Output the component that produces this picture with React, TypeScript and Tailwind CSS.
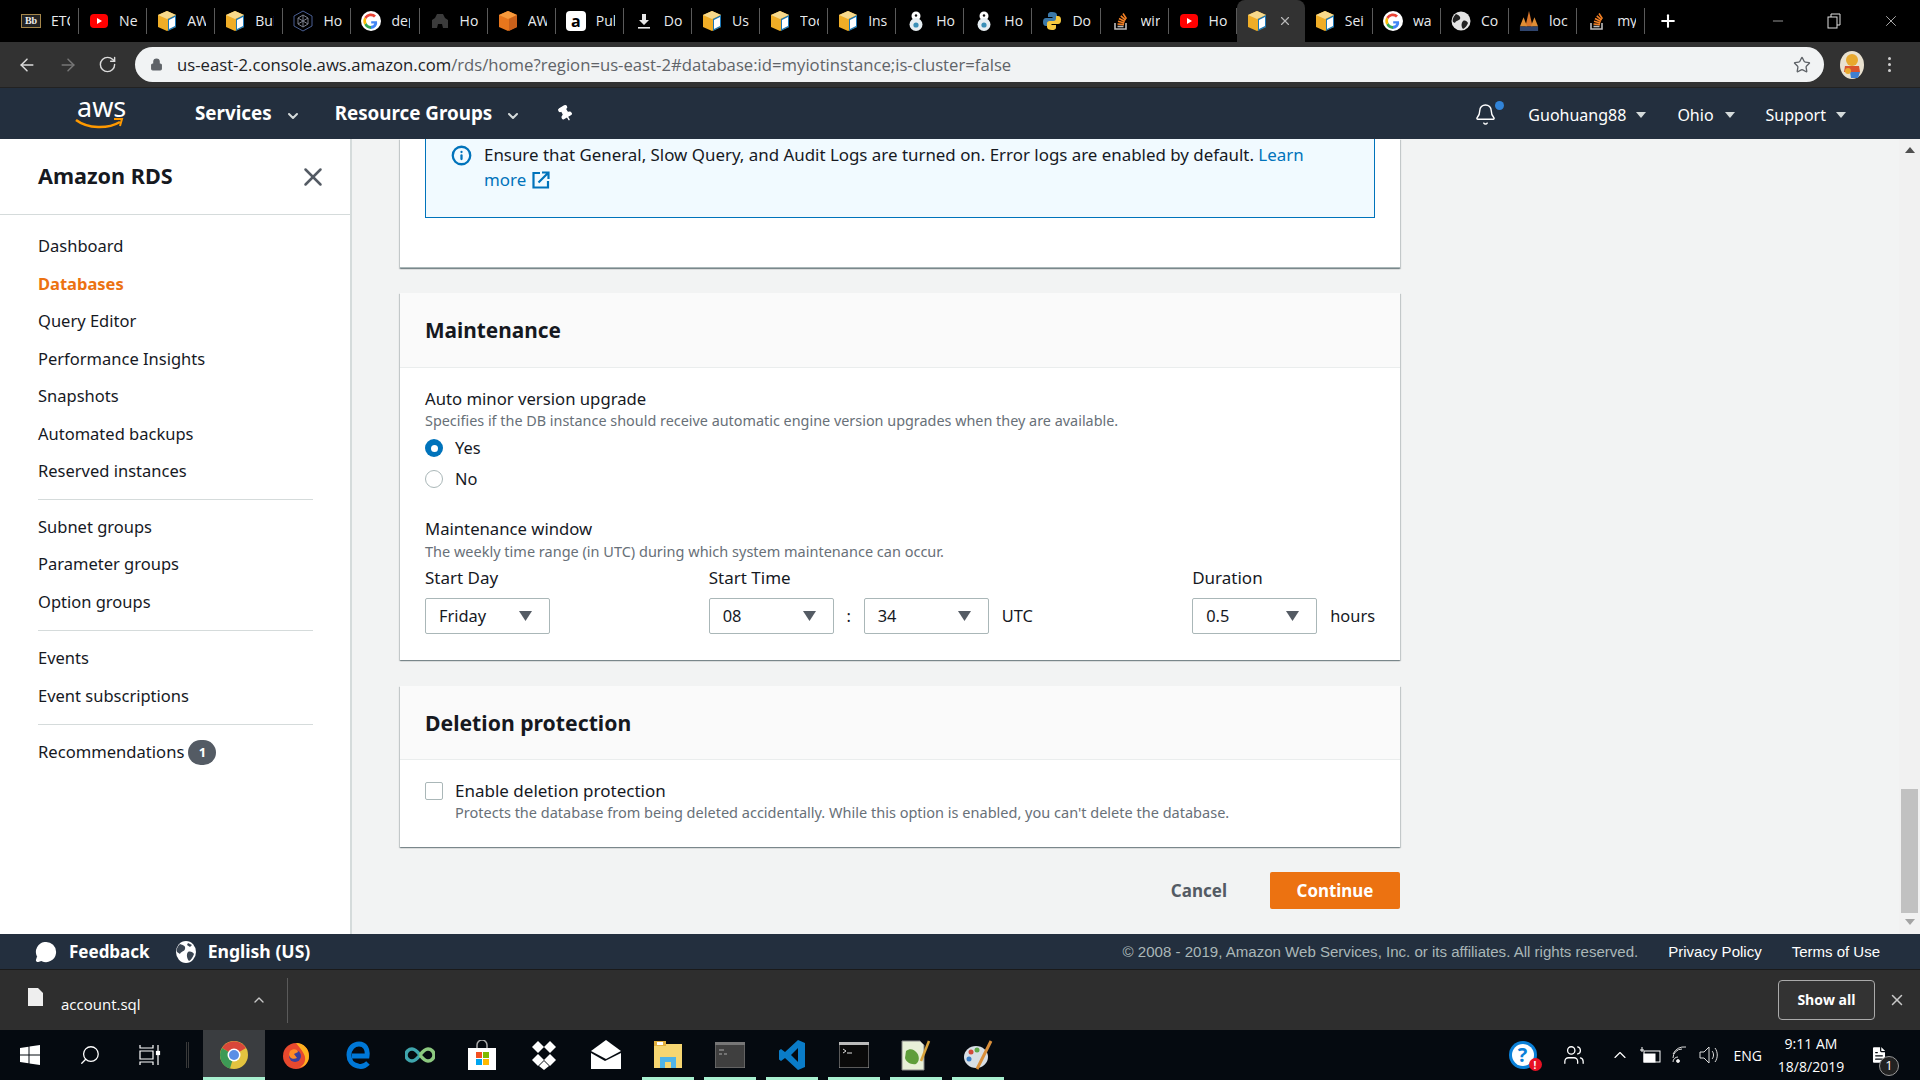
import React from 'react';
import { ArrowLeft, ArrowRight, RotateCw, Lock, Star, Plus, Minus, X, Bell, ChevronDown, ChevronUp, Search, Info, Pin, MessageCircle, FileText, Users } from 'lucide-react';

const Box: React.FC<{ orange?: boolean }> = ({ orange }) => (
  <svg width="20" height="22" viewBox="0 0 20 22">
    <polygon points="10,1 19,5 19,17 10,21 1,17 1,5" fill={orange ? '#e8761c' : '#f0ad26'} />
    <polygon points="1,5 10,9 19,5 10,1" fill={orange ? '#f79a3c' : '#f7d98c'} />
    <polygon points="11,9 19,5 19,17 11,21" fill={orange ? '#c9601a' : '#1b76b5'} />
    {!orange && <polygon points="12,10 18,7 18,16 12,19" fill="#ffffff" />}
  </svg>
);

const GoogleG: React.FC = () => (
  <svg width="20" height="20" viewBox="0 0 20 20">
    <circle cx="10" cy="10" r="10" fill="#fff" />
    <path d="M16 10.2H10.2v2.4h3.2a3.5 3.5 0 0 1-3.4 2.2V18a6.2 6.2 0 0 0 6-7.8z" fill="#4285f4" />
    <path d="M5.5 12a5 5 0 0 0 4.5 3v3a8 8 0 0 1-6.7-4.2z" fill="#34a853" />
    <path d="M5.3 8A5 5 0 0 0 5.5 12l-2.2 1.8a8 8 0 0 1 0-7.6z" fill="#fbbc05" />
    <path d="M3.4 6.1A7.6 7.6 0 0 1 15 4.4L13 6.4A5 5 0 0 0 5.3 8z" fill="#ea4335" />
  </svg>
);

const Youtube: React.FC = () => (
  <svg width="20" height="16" viewBox="0 0 20 16">
    <rect x="1" y="1" width="18" height="14" rx="4" fill="#ff0000" />
    <polygon points="8,5 13,8 8,11" fill="#fff" />
  </svg>
);

const StackOverflow: React.FC = () => (
  <svg width="20" height="20" viewBox="0 0 20 20" fill="none">
    <path d="M4 12v6h11v-6" stroke="#bcbbbb" strokeWidth="1.6" />
    <path d="M6.5 15.5h6" stroke="#bcbbbb" strokeWidth="1.6" />
    <path d="M6.5 13l6.5 .6M7 10.2l6.3 1.7M8 7.5l5.8 3M9.8 4.8l4.8 4.4M12 2.5l3.4 5.3" stroke="#f48024" strokeWidth="1.6" />
  </svg>
);

const BB8: React.FC = () => (
  <svg width="20" height="22" viewBox="0 0 20 22">
    <circle cx="10" cy="6" r="4.5" fill="#fff" />
    <circle cx="10" cy="14.5" r="6.5" fill="#e6eef2" />
    <circle cx="10" cy="15" r="2.6" fill="#3a8fb7" />
    <circle cx="10" cy="5.5" r="1.2" fill="#111" />
  </svg>
);

const Favicon: React.FC<{ kind: string }> = ({ kind }) => {
  switch (kind) {
    case 'bb':
      return <span className="flex h-[14px] w-[20px] items-center justify-center border border-[#a5864a] bg-[#222] text-[10px] font-bold leading-none text-[#eee] [font-family:'Liberation_Serif',serif]">Bb</span>;
    case 'yt':
      return <Youtube />;
    case 'box':
      return <Box />;
    case 'obox':
      return <Box orange />;
    case 'hex':
      return (
        <svg width="20" height="22" viewBox="0 0 20 22" fill="none" stroke="#4a5f94" strokeWidth="1">
          <polygon points="10,1 19,6 19,16 10,21 1,16 1,6" />
          <polygon points="10,5 15,8 15,14 10,17 5,14 5,8" stroke="#7a7f8c" />
          <path d="M10 5v12M5 8l10 6M15 8L5 14" stroke="#7a7f8c" />
        </svg>
      );
    case 'g':
      return <GoogleG />;
    case 'cloud':
      return (
        <svg width="20" height="18" viewBox="0 0 20 18">
          <path d="M2 16V8l3-2 2-4h6l2 4 3 2v8h-5l-1-4H8l-1 4z" fill="#3b3b3b" />
        </svg>
      );
    case 'a':
      return (
        <span className="flex h-[20px] w-[20px] items-center justify-center rounded-[4px] bg-white text-[16px] font-bold leading-none text-black">a</span>
      );
    case 'dl':
      return (
        <svg width="20" height="20" viewBox="0 0 20 20" fill="#e8e8e8">
          <polygon points="8,3 12,3 12,9 15,9 10,14 5,9 8,9" />
          <rect x="4" y="16" width="12" height="1.6" />
        </svg>
      );
    case 'bb8':
      return <BB8 />;
    case 'py':
      return (
        <svg width="20" height="20" viewBox="0 0 20 20">
          <path d="M10 1C6 1 6 3 6 4v2h4.500v1H4C2 7 1 8.500 1 11s1 4 3 4h2v-2.500C6 11 7 10 8.500 10h4C14 10 15 9 15 7.500V4c0-2-2-3-5-3z" fill="#3b78a8" />
          <path d="M10 19c4 0 4-2 4-3v-2H9.500v-1H16c2 0 3-1.500 3-4s-1-4-3-4h-2v2.500C14 9 13 10 11.500 10h-4C6 10 5 11 5 12.500V16c0 2 2 3 5 3z" fill="#f6c93f" />
        </svg>
      );
    case 'so':
      return <StackOverflow />;
    case 'globe':
      return (
        <svg width="20" height="20" viewBox="0 0 20 20">
          <circle cx="10" cy="10" r="9.500" fill="#e4e4e4" />
          <path d="M5 3c3 1 5 3 4 5s-4 1-5 4l-2-1c-1-3 1-6 3-8zM12 10c2-1 4 0 5 2-1 3-3 5-5 6-2-2-2-6 0-8z" fill="#222" />
        </svg>
      );
    case 'paa':
      return (
        <svg width="22" height="24" viewBox="0 0 22 24">
          <polygon points="11,1 15,18 7,18" fill="#d9762b" />
          <polygon points="5,8 9,18 1,18" fill="#e08e35" />
          <polygon points="17,8 21,18 13,18" fill="#e08e35" />
          <rect x="1" y="18" width="20" height="5" fill="#30456e" />
        </svg>
      );
    default:
      return null;
  }
};

const tabs: { kind: string; label: string; active?: boolean }[] = [
  { kind: 'bb', label: 'ETC' },
  { kind: 'yt', label: 'Ne' },
  { kind: 'box', label: 'AW' },
  { kind: 'box', label: 'Bui' },
  { kind: 'hex', label: 'Ho' },
  { kind: 'g', label: 'dep' },
  { kind: 'cloud', label: 'Ho' },
  { kind: 'obox', label: 'AW' },
  { kind: 'a', label: 'Pul' },
  { kind: 'dl', label: 'Do' },
  { kind: 'box', label: 'Us' },
  { kind: 'box', label: 'Too' },
  { kind: 'box', label: 'Ins' },
  { kind: 'bb8', label: 'Ho' },
  { kind: 'bb8', label: 'Ho' },
  { kind: 'py', label: 'Do' },
  { kind: 'so', label: 'wir' },
  { kind: 'yt', label: 'Ho' },
  { kind: 'box', label: '', active: true },
  { kind: 'box', label: 'Sei' },
  { kind: 'g', label: 'wa' },
  { kind: 'globe', label: 'Co' },
  { kind: 'paa', label: 'loc' },
  { kind: 'so', label: 'my' },
];

const TabStrip: React.FC = () => (
  <div className="flex h-[42px] items-center bg-black pl-[11px] text-[#e8eaed] [font-family:'Open_Sans',sans-serif]">
    {tabs.map((t, i) =>
      t.active ? (
        <div key={i} className="flex h-[42px] w-[68.1px] items-center rounded-t-[8px] bg-[#323232] pl-[10px]">
          <Favicon kind={t.kind} />
          <X className="ml-[11px] h-[14px] w-[14px] text-[#b8b8b8]" />
        </div>
      ) : (
        <div key={i} className="flex h-[26px] w-[68.1px] items-center border-r border-[#5a5a5a] pl-[10px]">
          <span className="flex w-[20px] shrink-0 justify-center"><Favicon kind={t.kind} /></span>
          <span className="ml-[10px] w-[19px] overflow-hidden whitespace-nowrap text-[14px] leading-none">{t.label}</span>
        </div>
      ),
    )}
    <Plus className="ml-[13px] h-[20px] w-[20px] text-white" strokeWidth={2.5} />
    <div className="ml-auto flex items-center text-[#e0e0e0]">
      <Minus className="h-[16px] w-[16px]" strokeWidth={1} />
      <svg className="ml-[41px]" width="14" height="16" viewBox="0 0 14 16" fill="none" stroke="#e0e0e0" strokeWidth="1">
        <rect x="1" y="4" width="9" height="11" />
        <path d="M4 4V1h9v11h-3" />
      </svg>
      <X className="ml-[41px] mr-[20px] h-[18px] w-[18px]" strokeWidth={1} />
    </div>
  </div>
);

const Avatar: React.FC = () => (
  <svg className="ml-[16px]" width="24" height="28" viewBox="0 0 24 28">
    <ellipse cx="12" cy="14" rx="12" ry="14" fill="#e9e1cf" />
    <circle cx="12" cy="9" r="6" fill="#e8a92e" />
    <path d="M5 15h14l1 6H4z" fill="#d9542e" />
    <path d="M10 21h10l-2 6h-7z" fill="#3f7fd0" />
    <circle cx="8" cy="20" r="3" fill="#e8a92e" />
  </svg>
);

const Toolbar: React.FC = () => (
  <div className="flex h-[46px] items-center border-b border-[#222] bg-[#323232]">
    <ArrowLeft className="ml-[17px] h-[20px] w-[20px] text-[#dcdcdc]" strokeWidth={1.8} />
    <ArrowRight className="ml-[21px] h-[20px] w-[20px] text-[#777]" strokeWidth={1.8} />
    <RotateCw className="ml-[20px] h-[19px] w-[19px] text-[#dcdcdc]" strokeWidth={1.8} />
    <div className="ml-[18px] flex h-[35px] w-[1689px] items-center rounded-full bg-[#f1f3f4] pl-[15px]">
      <Lock className="h-[13px] w-[13px] fill-[#5f6368] text-[#5f6368]" />
      <span className="ml-[14px] mt-px whitespace-nowrap text-[16.7px] leading-none text-[#5f6368] [font-family:'Open_Sans',sans-serif]">
        <span className="text-[#202124]">us-east-2.console.aws.amazon.com</span>/rds/home?region=us-east-2#database:id=myiotinstance;is-cluster=false
      </span>
      <Star className="ml-auto mr-[13px] h-[18px] w-[18px] text-[#5f6368]" strokeWidth={1.8} />
    </div>
    <Avatar />
    <div className="ml-[24px] flex flex-col gap-[3px]">
      <span className="h-[3px] w-[3px] rounded-full bg-[#d0d0d0]" />
      <span className="h-[3px] w-[3px] rounded-full bg-[#d0d0d0]" />
      <span className="h-[3px] w-[3px] rounded-full bg-[#d0d0d0]" />
    </div>
  </div>
);

const Caret: React.FC<{ className?: string }> = ({ className }) => (
  <svg className={className} width="10" height="6" viewBox="0 0 10 6"><polygon points="0,0 10,0 5,6" fill="#d5dbdb" /></svg>
);

const NavBar: React.FC = () => (
  <div className="flex h-[51px] items-center bg-[#232f3e] pl-[75px] text-white">
    <div className="relative h-[38px] w-[50px]">
      <span className="absolute left-[2px] top-[-3px] text-[27px] leading-[30px] text-white">aws</span>
      <svg className="absolute left-[-1px] top-[22px]" width="52" height="14" viewBox="0 0 52 14" fill="none">
        <path d="M2 3c12 9 32 9 44 2" stroke="#ff9900" strokeWidth="2.600" />
        <path d="M40 2h8l-2 7" stroke="#ff9900" strokeWidth="2" />
      </svg>
    </div>
    <span className="ml-[70px] text-[18.8px] font-bold">Services</span>
    <ChevronDown className="ml-[13px] mt-[4px] h-[16px] w-[16px] text-[#d5dbdb]" strokeWidth={3} />
    <span className="ml-[34px] text-[18.8px] font-bold">Resource Groups</span>
    <ChevronDown className="ml-[13px] mt-[4px] h-[16px] w-[16px] text-[#d5dbdb]" strokeWidth={3} />
    <Pin className="ml-[36px] h-[17px] w-[17px] rotate-[-30deg] fill-white text-white" />
    <div className="ml-auto flex items-center pr-[74px] pt-[3px] text-[16px]">
      <div className="relative h-[24px] w-[24px]">
        <Bell className="h-[23px] w-[23px]" strokeWidth={1.5} />
        <span className="absolute right-[-6px] top-[-2px] h-[9px] w-[9px] rounded-full bg-[#3184d8]" />
      </div>
      <span className="ml-[30px]">Guohuang88</span>
      <Caret className="ml-[10px]" />
      <span className="ml-[31px]">Ohio</span>
      <Caret className="ml-[11px]" />
      <span className="ml-[31px]">Support</span>
      <Caret className="ml-[10px]" />
    </div>
  </div>
);

const SideItem: React.FC<{ label: string; active?: boolean }> = ({ label, active }) => (
  <div className={`h-[37.5px] text-[16.5px] leading-[35.5px] ${active ? 'font-bold text-[#ec7211]' : 'text-[#16191f]'}`}>{label}</div>
);

const SideRule: React.FC = () => <div className="mr-[37px] h-px bg-[#d5dbdb]" />;

const SideNav: React.FC = () => (
  <aside className="w-[352px] shrink-0 border-r-2 border-[#d5dbdb] bg-white">
    <div className="flex h-[76px] items-center justify-between border-b border-[#d5dbdb] pl-[38px] pr-[22px]">
      <h2 className="mb-[2px] text-[21.6px] font-bold leading-none text-[#16191f]">Amazon RDS</h2>
      <X className="h-[30px] w-[30px] text-[#545b64]" strokeWidth={2} />
    </div>
    <div className="pl-[38px] pt-[13px]">
      <SideItem label="Dashboard" />
      <SideItem label="Databases" active />
      {['Query Editor', 'Performance Insights', 'Snapshots', 'Automated backups', 'Reserved instances'].map((l) => <SideItem key={l} label={l} />)}
      <div className="h-[8px]" />
      <SideRule />
      <div className="h-[9px]" />
      {['Subnet groups', 'Parameter groups', 'Option groups'].map((l) => <SideItem key={l} label={l} />)}
      <div className="h-[9px]" />
      <SideRule />
      <div className="h-[9px]" />
      {['Events', 'Event subscriptions'].map((l) => <SideItem key={l} label={l} />)}
      <div className="h-[9px]" />
      <SideRule />
      <div className="h-[9px]" />
      <div className="flex h-[37.5px] items-center text-[16.6px] text-[#16191f]">
        Recommendations
        <span className="ml-[4px] flex h-[25px] w-[28px] items-center justify-center rounded-full bg-[#545b64] text-[13px] font-bold text-white">1</span>
      </div>
    </div>
  </aside>
);

const Select: React.FC<{ value: string }> = ({ value }) => (
  <div className="flex h-[36px] w-[125px] shrink-0 items-center justify-between rounded-[2px] border border-[#aab7b8] bg-white pl-[13px] pr-[17px] text-[16.4px] text-[#16191f]">
    {value}
    <svg width="13" height="10" viewBox="0 0 13 10"><polygon points="0,0 13,0 6.500,10" fill="#545b64" /></svg>
  </div>
);

const LearnIcon: React.FC = () => (
  <svg className="ml-[6px] inline align-[-3px]" width="18" height="18" viewBox="0 0 18 18" fill="none" stroke="#0073bb" strokeWidth="2.200">
    <path d="M8 2H1.500v14.500H16V10" />
    <path d="M6.500 11.500L15.500 2.500M10 1.500h6.500V8" />
  </svg>
);

const cardShadow = 'shadow-[0_1px_1px_0_rgba(0,28,36,0.3),1px_1px_1px_0_rgba(0,28,36,0.15),-1px_1px_1px_0_rgba(0,28,36,0.15)]';

const Main: React.FC = () => (
  <main className="min-w-0 flex-1 overflow-hidden bg-[#f2f3f3] pl-[48px] text-[#16191f]">
    <div className="w-[1000px]">
      <section className={`border-b border-[#aab7b8] bg-white px-[25px] pb-[49px] ${cardShadow}`}>
        <div className="flex h-[79px] border border-t-0 border-[#0073bb] bg-[#f1faff] pl-[25px] pr-[50px] text-[16.9px] leading-[25px]">
          <Info className="mt-[6px] h-[21px] w-[21px] shrink-0 text-[#0073bb]" strokeWidth={2.6} />
          <div className="ml-[12px] mt-[3px]">
            <div className="whitespace-nowrap">
              Ensure that General, Slow Query, and Audit Logs are turned on. Error logs are enabled by default. <span className="text-[#0073bb]">Learn</span>
            </div>
            <div className="text-[#0073bb]">more<LearnIcon /></div>
          </div>
        </div>
      </section>

      <section className={`mt-[25px] bg-white ${cardShadow}`}>
        <div className="flex h-[75px] items-center border-b border-[#eaeded] bg-[#fafafa] px-[25px] pt-[2px]">
          <h2 className="text-[20.8px] font-bold">Maintenance</h2>
        </div>
        <div className="px-[25px] pb-[26px] pt-[20px]">
          <div className="text-[16.7px] leading-[22px]">Auto minor version upgrade</div>
          <div className="mt-[2px] text-[14.4px] leading-[18px] text-[#687078]">Specifies if the DB instance should receive automatic engine version upgrades when they are available.</div>
          <div className="mt-[6px] flex h-[24px] items-center text-[16.4px]">
            <span className="flex h-[18px] w-[18px] items-center justify-center rounded-full bg-[#0073bb]"><span className="h-[7px] w-[7px] rounded-full bg-white" /></span>
            <span className="ml-[12px]">Yes</span>
          </div>
          <div className="mt-[7px] flex h-[24px] items-center text-[16.4px]">
            <span className="h-[18px] w-[18px] rounded-full border border-[#aab7b8] bg-white" />
            <span className="ml-[12px]">No</span>
          </div>
          <div className="mt-[27px] text-[16.7px] leading-[22px]">Maintenance window</div>
          <div className="mt-[2px] text-[14.5px] leading-[18px] text-[#687078]">The weekly time range (in UTC) during which system maintenance can occur.</div>
          <div className="mt-[7px] flex text-[16.4px]">
            <div className="w-[284px]">
              <div className="text-[17px] leading-[22px]">Start Day</div>
              <div className="mt-[9px]"><Select value="Friday" /></div>
            </div>
            <div className="w-[484px]">
              <div className="text-[17px] leading-[22px]">Start Time</div>
              <div className="mt-[9px] flex items-center">
                <Select value="08" />
                <span className="w-[30px] text-center">:</span>
                <Select value="34" />
                <span className="ml-[13px]">UTC</span>
              </div>
            </div>
            <div>
              <div className="text-[17px] leading-[22px]">Duration</div>
              <div className="mt-[9px] flex items-center">
                <Select value="0.5" />
                <span className="ml-[13px]">hours</span>
              </div>
            </div>
          </div>
        </div>
      </section>

      <section className={`mt-[26px] bg-white ${cardShadow}`}>
        <div className="flex h-[74px] items-center border-b border-[#eaeded] bg-[#fafafa] px-[25px]">
          <h2 className="text-[21.2px] font-bold">Deletion protection</h2>
        </div>
        <div className="px-[25px] pb-[26px] pt-[20px]">
          <div className="flex h-[22px] items-center text-[17px]">
            <span className="h-[18px] w-[18px] rounded-[2px] border border-[#aab7b8] bg-white" />
            <span className="ml-[12px]">Enable deletion protection</span>
          </div>
          <div className="ml-[30px] mt-px text-[14.53px] leading-[18px] text-[#687078]">Protects the database from being deleted accidentally. While this option is enabled, you can't delete the database.</div>
        </div>
      </section>

      <div className="mt-[25px] flex items-center justify-end">
        <span className="text-[17px] font-bold text-[#545b64]">Cancel</span>
        <button className="ml-[43px] h-[37px] w-[130px] rounded-[2px] bg-[#ec7211] text-[16.9px] font-bold text-white">Continue</button>
      </div>
    </div>
  </main>
);

const ScrollBar: React.FC = () => (
  <div className="flex w-[21px] shrink-0 flex-col items-center bg-[#f1f1f1] pt-[8px]">
    <svg width="10" height="6" viewBox="0 0 10 6"><polygon points="5,0 10,6 0,6" fill="#505050" /></svg>
    <div className="mt-[636px] h-[124px] w-[17px] bg-[#c1c1c1]" />
    <svg className="mt-[6px]" width="10" height="6" viewBox="0 0 10 6"><polygon points="0,0 10,0 5,6" fill="#a3a3a3" /></svg>
  </div>
);

const FooterGlobe: React.FC = () => (
  <svg className="ml-[26px]" width="20" height="22" viewBox="0 0 20 22">
    <ellipse cx="10" cy="11" rx="10" ry="11" fill="#ffffff" />
    <path d="M4 3c3 1 6 2 5 5s-4 2-5 5l-3-2c-1-3 1-6 3-8zM12 11c2-1 5 0 6 2-1 3-3 6-5 7-2-2-3-7-1-9zM12 2l4 2-2 2-3-2z" fill="#3a4552" />
  </svg>
);

const Footer: React.FC = () => (
  <div className="flex h-[36px] items-center border-b border-[#1a1a1a] bg-[#232f3e] pl-[35px] pr-[40px] text-white">
    <MessageCircle className="h-[22px] w-[22px] fill-white text-white" />
    <span className="ml-[12px] text-[17px] font-bold">Feedback</span>
    <FooterGlobe />
    <span className="ml-[12px] text-[17.6px] font-bold">English (US)</span>
    <span className="ml-auto mt-[2px] text-[15.05px] text-[#aab7b8] [font-family:'Liberation_Sans',sans-serif]">© 2008 - 2019, Amazon Web Services, Inc. or its affiliates. All rights reserved.</span>
    <span className="ml-[30px] mt-[2px] text-[15px] [font-family:'Liberation_Sans',sans-serif]">Privacy Policy</span>
    <span className="ml-[30px] mt-[2px] text-[15px] [font-family:'Liberation_Sans',sans-serif]">Terms of Use</span>
  </div>
);

const DownloadBar: React.FC = () => (
  <div className="flex h-[60px] items-center bg-[#2e2e2e] text-white [font-family:'Open_Sans',sans-serif]">
    <div className="flex h-[45px] w-[288px] items-center border-r border-[#5a5a5a] pl-[28px]">
      <svg className="mb-[6px]" width="15" height="18" viewBox="0 0 15 18"><path d="M0 0h10l5 5v13H0z" fill="#eeeeee" /></svg>
      <span className="ml-[18px] mt-[8px] text-[15px]">account.sql</span>
      <ChevronUp className="ml-[110px] h-[16px] w-[16px] text-[#c8c8c8]" strokeWidth={2} />
    </div>
    <button className="mb-[1px] ml-auto h-[40px] w-[97px] rounded-[4px] border border-[#aaaaaa] bg-[#333] text-[14px] font-bold">Show all</button>
    <X className="ml-[13px] mr-[14px] h-[18px] w-[18px] text-[#c8c8c8]" strokeWidth={2} />
  </div>
);

const TaskIcon: React.FC<{ running?: boolean; active?: boolean; children: React.ReactNode }> = ({ running, active, children }) => (
  <div className={`relative flex h-[50px] w-[62px] shrink-0 items-center justify-center ${active ? 'bg-[#3a3d40]' : ''}`}>
    {children}
    {running && <span className={`absolute bottom-0 h-[3px] bg-[#a8f0d0] ${active ? 'left-0 right-0' : 'left-[5px] right-[5px]'}`} />}
  </div>
);

const Chrome: React.FC = () => (
  <svg width="28" height="28" viewBox="0 0 28 28">
    <circle cx="14" cy="14" r="14" fill="#e2c33f" />
    <path d="M14 14L2 7A14 14 0 0 1 26 7z" fill="#d8473a" />
    <path d="M14 14L2 7A14 14 0 0 0 10 27.500z" fill="#3d9a56" />
    <circle cx="14" cy="14" r="6.500" fill="#fff" />
    <circle cx="14" cy="14" r="5" fill="#5b8ee6" />
  </svg>
);

const Taskbar: React.FC = () => (
  <div className="flex h-[50px] items-center bg-[#050a10] text-white [font-family:'Open_Sans',sans-serif]">
    <svg className="ml-[20px]" width="20" height="20" viewBox="0 0 20 20" fill="#fff">
      <polygon points="0,3 8.500,1.800 8.500,9.500 0,9.500" />
      <polygon points="9.500,1.600 20,0 20,9.500 9.500,9.500" />
      <polygon points="0,10.500 8.500,10.500 8.500,18.200 0,17" />
      <polygon points="9.500,10.500 20,10.500 20,20 9.500,18.400" />
    </svg>
    <Search className="ml-[39px] h-[22px] w-[22px] -scale-x-100 text-white" strokeWidth={1.4} />
    <svg className="ml-[38px]" width="22" height="20" viewBox="0 0 22 20" fill="none" stroke="#fff" strokeWidth="1.200">
      <path d="M1 0v3h13V0M1 20v-3h13v3M1 6h13v8H1zM19 0v6M19 10v10" />
      <rect x="17.500" y="6.500" width="3" height="3" fill="#fff" />
    </svg>
    <span className="ml-[25px] h-[26px] w-[3px] border-x border-[#3a3a3a]" />
    <div className="ml-[14px] flex">
      <TaskIcon active running><Chrome /></TaskIcon>
      <TaskIcon>
        <svg width="28" height="28" viewBox="0 0 28 28">
          <circle cx="14" cy="15" r="13" fill="#e8492e" />
          <path d="M14 2c8 0 13 6 13 13s-5 12-13 12c6 0 10-5 9-11-1-4-4-8-9-14z" fill="#ffb11f" />
          <circle cx="13" cy="15" r="6" fill="#3a3f9b" />
          <path d="M8 10c3-3 8-2 8 1l-4 2 3 4c-4 2-8 0-8-4z" fill="#ff8b25" />
        </svg>
      </TaskIcon>
      <TaskIcon>
        <svg width="26" height="28" viewBox="0 0 26 28" fill="none">
          <path d="M23 22c-3 3-7 4-10 3-6-1-9-6-9-11C4 7 9 3 14 3c6 0 9 5 8 12H7" stroke="#0078d7" strokeWidth="5" />
        </svg>
      </TaskIcon>
      <TaskIcon>
        <svg width="30" height="16" viewBox="0 0 30 16" fill="none" strokeWidth="3.500">
          <path d="M15 8c-3-4-5-6-8-6a6 6 0 0 0 0 12c3 0 5-2 8-6" stroke="#3fa5ad" />
          <path d="M15 8c3-4 5-6 8-6a6 6 0 0 1 0 12c-3 0-5-2-8-6" stroke="#8cc97f" />
        </svg>
      </TaskIcon>
      <TaskIcon>
        <svg width="28" height="30" viewBox="0 0 28 30">
          <path d="M9 8V5a5 5 0 0 1 10 0v3" stroke="#aaa" strokeWidth="1.500" fill="none" />
          <rect x="0" y="8" width="28" height="22" fill="#fff" />
          <rect x="8" y="12" width="6" height="6" fill="#f25022" />
          <rect x="15" y="12" width="6" height="6" fill="#7fba00" />
          <rect x="8" y="19" width="6" height="6" fill="#00a4ef" />
          <rect x="15" y="19" width="6" height="6" fill="#ffb900" />
        </svg>
      </TaskIcon>
      <TaskIcon>
        <svg width="28" height="30" viewBox="0 0 28 30" fill="#fff">
          <polygon points="8,1 14,7 8,13 2,7" />
          <polygon points="20,1 26,7 20,13 14,7" />
          <polygon points="8,14 14,20 8,26 2,20" />
          <polygon points="20,14 14,20 20,26 26,20" />
          <polygon points="14,21 19,26 14,30 9,26" />
        </svg>
      </TaskIcon>
      <TaskIcon>
        <svg width="30" height="30" viewBox="0 0 30 30" fill="#fff">
          <polygon points="15,0 30,11 15,19 0,11" />
          <polygon points="0,13 14,21 30,13 30,29 0,29" />
        </svg>
      </TaskIcon>
      <TaskIcon running>
        <svg width="28" height="28" viewBox="0 0 28 28">
          <rect x="0" y="3" width="28" height="24" fill="#f6d671" />
          <rect x="0" y="0" width="12" height="5" fill="#e3b13f" />
          <rect x="3" y="1" width="6" height="3" fill="#fff" />
          <rect x="6" y="16" width="16" height="11" fill="#4fb4e8" />
          <rect x="11" y="21" width="6" height="6" fill="#f6d671" />
        </svg>
      </TaskIcon>
      <TaskIcon running>
        <svg width="30" height="26" viewBox="0 0 30 26">
          <rect x="0" y="0" width="30" height="26" fill="#3f3f3f" stroke="#888" />
          <rect x="0" y="0" width="30" height="3" fill="#777" />
          <path d="M4 8h5M4 12h3M9 12h3" stroke="#aaa" />
        </svg>
      </TaskIcon>
      <TaskIcon running>
        <svg width="26" height="30" viewBox="0 0 26 30">
          <path d="M19 0l7 3v24l-7 3L6 18l-4 3-2-1.500V10.500L2 9l4 3z" fill="#0a7cc8" />
          <path d="M19 8l-7 7 7 7z" fill="#050a10" />
        </svg>
      </TaskIcon>
      <TaskIcon running>
        <svg width="30" height="26" viewBox="0 0 30 26">
          <rect x="0" y="0" width="30" height="26" fill="#0a0a0a" stroke="#aaa" />
          <rect x="0" y="0" width="30" height="3" fill="#bbb" />
          <path d="M4 7l3 2-3 2M8 11h5" stroke="#ddd" fill="none" />
        </svg>
      </TaskIcon>
      <TaskIcon running>
        <svg width="30" height="32" viewBox="0 0 30 32">
          <path d="M1 2h18l4 4v25H1z" fill="#e8f0d8" stroke="#888" />
          <path d="M5 12c4-3 8-2 11 2s2 9-1 11c-5 1-10-2-11-6z" fill="#5f9e3b" />
          <path d="M20 22L28 2" stroke="#d9a43b" strokeWidth="2.500" />
        </svg>
      </TaskIcon>
      <TaskIcon running>
        <svg width="30" height="32" viewBox="0 0 30 32">
          <ellipse cx="13" cy="18" rx="12" ry="11" fill="#d8dfe5" />
          <circle cx="8" cy="13" r="2.500" fill="#d24a3a" />
          <circle cx="14" cy="11" r="2.500" fill="#5fa84a" />
          <circle cx="6" cy="20" r="2.500" fill="#3a7ec8" />
          <path d="M14 30L28 2" stroke="#d98f3b" strokeWidth="3" />
        </svg>
      </TaskIcon>
    </div>
    <div className="ml-auto flex items-center">
      <span className="relative flex h-[28px] w-[28px] items-center justify-center rounded-full bg-[#0a80d8] text-[20px] font-bold">
        <span className="flex h-[22px] w-[22px] items-center justify-center rounded-full bg-white text-[#0a80d8]">?</span>
        <span className="absolute bottom-[-2px] right-[-5px] flex h-[13px] w-[13px] items-center justify-center rounded-full bg-[#e81123] text-[10px] leading-none text-white">!</span>
      </span>
      <Users className="ml-[26px] h-[22px] w-[22px]" strokeWidth={1.4} />
      <ChevronUp className="ml-[25px] h-[20px] w-[20px]" strokeWidth={1.4} />
      <svg className="ml-[9px]" width="22" height="18" viewBox="0 0 22 18" fill="none" stroke="#fff">
        <rect x="5" y="5" width="16" height="11" />
        <rect x="5" y="8" width="11" height="8" fill="#fff" />
        <path d="M3 1v5M1 4h4" />
      </svg>
      <svg className="ml-[10px]" width="20" height="18" viewBox="0 0 20 18" fill="none" stroke="#ddd">
        <path d="M2 16a5 5 0 0 1 5-5M2 12a9 9 0 0 1 9-9M2 8a13 13 0 0 1 13-7" />
        <circle cx="7" cy="15" r="1.500" fill="#fff" />
      </svg>
      <svg className="ml-[8px]" width="20" height="20" viewBox="0 0 20 20" fill="none" stroke="#ddd">
        <path d="M1 7h4l5-5v16l-5-5H1zM13 6c2 2 2 6 0 8M16 3c3 4 3 10 0 14" />
      </svg>
      <span className="ml-[15px] text-[14px]">ENG</span>
      <div className="ml-[12px] w-[74px] text-center text-[14px] leading-[23px]">
        <div>9:11 AM</div>
        <div>18/8/2019</div>
      </div>
      <span className="relative ml-[21px] mr-[31px] h-[20px] w-[20px]">
        <FileText className="h-[20px] w-[20px] fill-white text-[#050a10]" strokeWidth={1.5} />
        <span className="absolute bottom-[-11px] right-[-10px] flex h-[20px] w-[20px] items-center justify-center rounded-full border border-[#999] bg-[#222] text-[13px]">1</span>
      </span>
    </div>
  </div>
);

export default function App() {
  return (
    <div className="flex h-[1080px] w-[1920px] flex-col overflow-hidden bg-black [font-family:'Noto_Sans',sans-serif]">
      <TabStrip />
      <Toolbar />
      <NavBar />
      <div className="flex h-[795px] min-h-0">
        <SideNav />
        <Main />
        <ScrollBar />
      </div>
      <Footer />
      <DownloadBar />
      <Taskbar />
    </div>
  );
}
